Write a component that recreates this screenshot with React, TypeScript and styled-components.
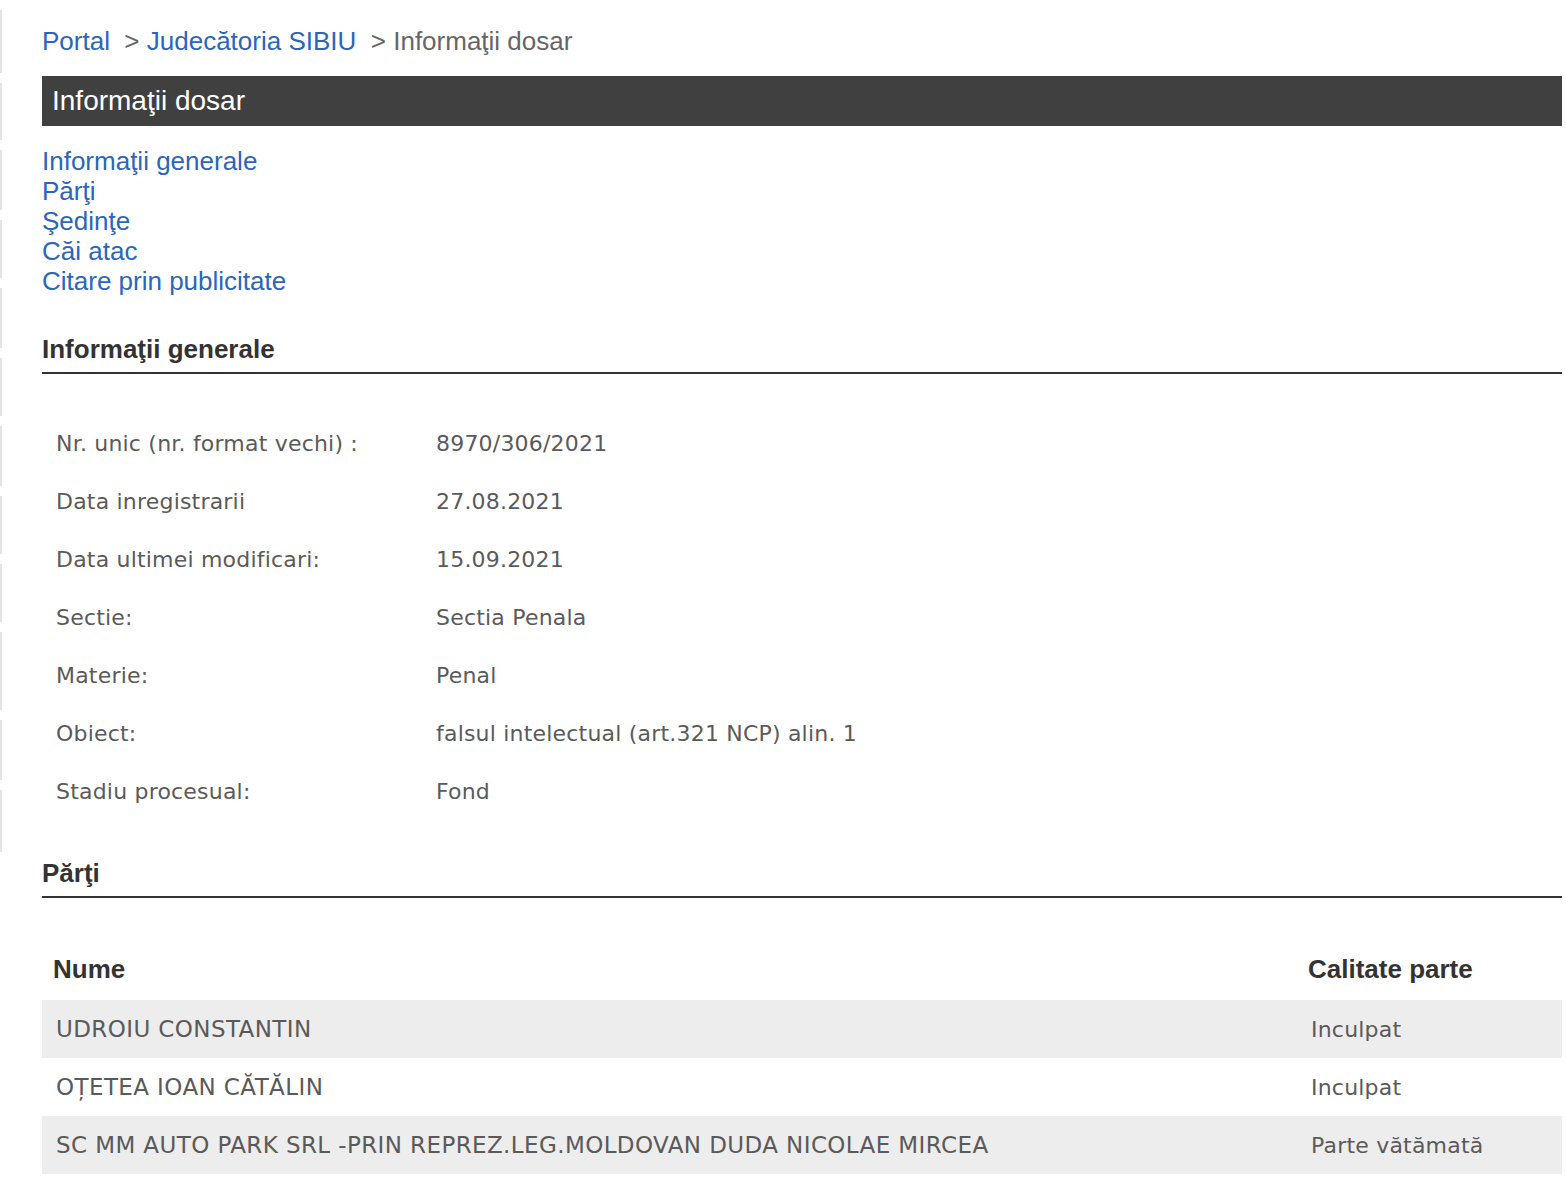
import styled, { createGlobalStyle } from 'styled-components';

const GlobalStyle = createGlobalStyle`
  html, body {
    margin: 0;
    padding: 0;
    background: #fff;
  }
  body {
    font-family: "Liberation Sans", Arial, sans-serif;
  }
`;

// Estilos
const Pagina = styled.div`
  display: flex;
  align-items: flex-start;
  width: 1566px;
`;

const Trilha = styled.div`
  display: flex;
  flex-direction: column;
  gap: 10px;
  width: 2px;
  padding-top: 10px;
`;

const Segmento = styled.div<{ $h: number }>`
  width: 2px;
  height: ${(p) => p.$h}px;
  background: #e3e3eb;
`;

const Conteudo = styled.main`
  flex: 1;
  margin: 0 4px 0 40px;
  padding-top: 26px;
  padding-bottom: 5px;
`;

const Breadcrumb = styled.div`
  font-size: 26px;
  line-height: 30px;
  color: #666;
  white-space: pre;
`;

const Link = styled.a`
  color: #2b66b9;
  text-decoration: none;
`;

const Barra = styled.h1`
  margin: 20px 0 0;
  padding: 10px 10px;
  background: #404040;
  color: #fff;
  font-size: 28px;
  line-height: 30px;
  font-weight: normal;
`;

const Menu = styled.nav`
  display: flex;
  flex-direction: column;
  margin-top: 20px;
  font-size: 26px;
  line-height: 30px;
`;

const Secao = styled.h2`
  margin: 38px 0 0;
  padding-bottom: 8px;
  border-bottom: 2px solid #333;
  font-size: 26px;
  line-height: 30px;
  font-weight: bold;
  color: #333;
`;

const Tabela = styled.table<{ $topo: number }>`
  width: 100%;
  margin-top: ${(p) => p.$topo}px;
  border-collapse: collapse;
  font-family: "DejaVu Sans", Verdana, sans-serif;
  font-size: 22px;
  letter-spacing: 0.2px;
  color: #5a5a5a;
`;

const Linha = styled.tr<{ $cinza?: boolean }>`
  height: 58px;
  background: ${(p) => (p.$cinza ? '#ededed' : 'transparent')};
`;

const Celula = styled.td<{ $largura?: number; $maiusculas?: boolean }>`
  padding: 0 14px;
  vertical-align: middle;
  width: ${(p) => (p.$largura ? `${p.$largura}px` : 'auto')};
  box-sizing: border-box;
  font-size: ${(p) => (p.$maiusculas ? '23px' : 'inherit')};
  letter-spacing: ${(p) => (p.$maiusculas ? '0.4px' : 'inherit')};
`;

const Cabecalho = styled.th<{ $largura?: number }>`
  padding: 0 11px 4px;
  height: 58px;
  text-align: left;
  vertical-align: middle;
  width: ${(p) => (p.$largura ? `${p.$largura}px` : 'auto')};
  box-sizing: border-box;
  font-family: "Liberation Sans", Arial, sans-serif;
  font-size: 26px;
  letter-spacing: 0;
  font-weight: bold;
  color: #333;
`;

const segmentos = [63, 57, 60, 58, 60, 58, 60, 58, 58, 78, 60, 62];

const informatii = [
  ['Nr. unic (nr. format vechi) :', '8970/306/2021'],
  ['Data inregistrarii', '27.08.2021'],
  ['Data ultimei modificari:', '15.09.2021'],
  ['Sectie:', 'Sectia Penala'],
  ['Materie:', 'Penal'],
  ['Obiect:', 'falsul intelectual (art.321 NCP) alin. 1'],
  ['Stadiu procesual:', 'Fond'],
];

const parti = [
  ['UDROIU CONSTANTIN', 'Inculpat'],
  ['OȚETEA IOAN CĂTĂLIN', 'Inculpat'],
  ['SC MM AUTO PARK SRL -PRIN REPREZ.LEG.MOLDOVAN DUDA NICOLAE MIRCEA', 'Parte vătămată'],
];

export default function App() {
  return (
    <>
      <GlobalStyle />
      <Pagina>
        <Trilha>
          {segmentos.map((h, i) => (
            <Segmento key={i} $h={h} />
          ))}
        </Trilha>

        <Conteudo>
          <Breadcrumb>
            <Link href="#">Portal</Link>{'  > '}
            <Link href="#">Judecătoria SIBIU</Link>{'  > '}Informaţii dosar
          </Breadcrumb>

          <Barra>Informaţii dosar</Barra>

          <Menu>
            <Link href="#">Informaţii generale</Link>
            <Link href="#">Părţi</Link>
            <Link href="#">Şedinţe</Link>
            <Link href="#">Căi atac</Link>
            <Link href="#">Citare prin publicitate</Link>
          </Menu>

          <Secao>Informaţii generale</Secao>
          <Tabela $topo={40}>
            <tbody>
              {informatii.map(([rotulo, valor]) => (
                <Linha key={rotulo}>
                  <Celula $largura={380}>{rotulo}</Celula>
                  <Celula>{valor}</Celula>
                </Linha>
              ))}
            </tbody>
          </Tabela>

          <Secao>Părţi</Secao>
          <Tabela $topo={44}>
            <thead>
              <tr>
                <Cabecalho $largura={1255}>Nume</Cabecalho>
                <Cabecalho>Calitate parte</Cabecalho>
              </tr>
            </thead>
            <tbody>
              {parti.map(([nume, calitate], i) => (
                <Linha key={nume} $cinza={i % 2 === 0}>
                  <Celula $largura={1255} $maiusculas>
                    {nume}
                  </Celula>
                  <Celula>{calitate}</Celula>
                </Linha>
              ))}
            </tbody>
          </Tabela>
        </Conteudo>
      </Pagina>
    </>
  );
}
